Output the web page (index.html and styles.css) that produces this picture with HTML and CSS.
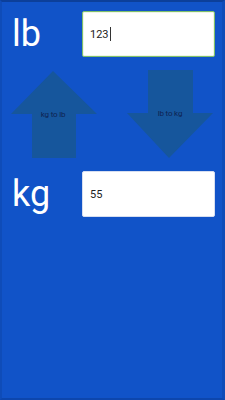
FILE: index.html
```html
<!DOCTYPE html>
<html lang="en">
<head>
    <meta charset="UTF-8">
    <meta name="viewport" content="width=device-width, initial-scale=1.0">
    <title>lb / kg</title>
    <link rel="stylesheet" href="styles.css">
</head>
<body>
    <div class="screen">
        <div class="row">
            <span class="unit">lb</span>
            <div class="field focused">123<span class="caret"></span></div>
        </div>

        <div class="arrows">
            <svg class="arrow up" width="86" height="87" viewBox="0 0 86 87">
                <polygon points="42,0 86,43 65,43 65,87 21,87 21,43 0,43"/>
                <text x="42" y="46">kg to lb</text>
            </svg>
            <svg class="arrow down" width="86" height="88" viewBox="0 0 86 88">
                <polygon points="21,0 66,0 66,43 86,43 42,88 0,43 21,43"/>
                <text x="43" y="46">lb to kg</text>
            </svg>
        </div>

        <div class="row">
            <span class="unit">kg</span>
            <div class="field">55</div>
        </div>
    </div>
</body>
</html>
```

FILE: styles.css
```css
* {
    margin: 0;
    padding: 0;
    box-sizing: border-box;
}

body {
    font-family: Roboto, 'Noto Sans', sans-serif;
    background: #1153c8;
}

.screen {
    height: 400px;
    width: 225px;
    background: #1153c8;
    border-top: 2px solid #0c3f9a;
    border-bottom: 2px solid #0d46ad;
    border-left: 2px solid #0f4cb8;
    border-right: 3px solid #0f4cb8;
    padding-top: 9px;
}

.row {
    display: flex;
    align-items: center;
    height: 46px;
    padding-left: 10px;
}

.unit {
    width: 70px;
    color: #fff;
    font-size: 36px;
    line-height: 46px;
}

.field {
    width: 133px;
    height: 46px;
    background: #fff;
    border: 1px solid #d6def0;
    border-radius: 2px;
    padding-left: 7px;
    display: flex;
    align-items: center;
    font-size: 11px;
    color: #222;
}

.field.focused {
    border: 1px solid #7fbf6a;
    box-shadow: inset 0 0 0 1px #eef6e8;
}

.caret {
    display: inline-block;
    width: 1px;
    height: 14px;
    background: #333;
    margin-left: 1px;
}

.arrows {
    display: flex;
    justify-content: space-between;
    padding: 0 9px 0 9px;
    margin: 13px 0 13px;
}

.arrow polygon {
    fill: #16569c;
}

.arrow text {
    font-family: Roboto, sans-serif;
    font-size: 8px;
    letter-spacing: -0.2px;
    fill: #0e2352;
    text-anchor: middle;
}

.arrow.up {
    margin-top: 1px;
}
```
